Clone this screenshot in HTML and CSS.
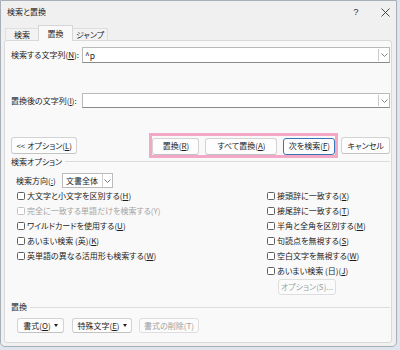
FILE: index.html
```html
<!DOCTYPE html>
<html lang="ja">
<head>
<meta charset="utf-8">
<title>検索と置換</title>
<link rel="stylesheet" href="styles.css">
</head>
<body>
<div class="window">
  <div class="titlebar">
    <span class="title">検索と置換</span>
    <span class="help">?</span>
    <svg class="close" width="9" height="9" viewBox="0 0 9 9"><path d="M0.5 0.5 L8.5 8.5 M8.5 0.5 L0.5 8.5" stroke="#333" stroke-width="0.9" fill="none"/></svg>
  </div>
  <div class="tabs">
    <div class="tab first">検索</div>
    <div class="tab active">置換</div>
    <div class="tab last">ジャンプ</div>
  </div>
  <div class="panel">
    <div class="row find">
      <label class="field-label">検索する文字列(<u>N</u>):</label>
      <div class="combo tall">
        <span class="value">^p</span>
        <span class="arrow"><svg width="7" height="4" viewBox="0 0 7 4"><path d="M0.5 0.5 L3.5 3.5 L6.5 0.5" stroke="#777" stroke-width="0.9" fill="none"/></svg></span>
      </div>
    </div>
    <div class="row replace">
      <label class="field-label">置換後の文字列(<u>I</u>):</label>
      <div class="combo">
        <span class="value"></span>
        <span class="arrow"><svg width="7" height="4" viewBox="0 0 7 4"><path d="M0.5 0.5 L3.5 3.5 L6.5 0.5" stroke="#777" stroke-width="0.9" fill="none"/></svg></span>
      </div>
    </div>
    <div class="row buttons">
      <div class="btn btn-options">&lt;&lt; オプション(<u>L</u>)</div>
      <div class="highlight">
        <div class="btn btn-replace">置換(<u>R</u>)</div>
        <div class="btn btn-all">すべて置換(<u>A</u>)</div>
        <div class="btn btn-next focus">次を検索(<u>F</u>)</div>
      </div>
      <div class="btn btn-cancel">キャンセル</div>
    </div>
    <div class="group-title first-group"><span>検索オプション</span><span class="rule"></span></div>
    <div class="row direction">
      <label class="dir-label">検索方向(<u>:</u>)</label>
      <div class="select">
        <span class="value">文書全体</span>
        <span class="sel-arrow"><svg width="7" height="4" viewBox="0 0 7 4"><path d="M0.5 0.5 L3.5 3.5 L6.5 0.5" stroke="#666" stroke-width="0.9" fill="none"/></svg></span>
      </div>
    </div>
    <div class="options">
      <div class="col col-left">
        <div class="check"><span class="box"></span>大文字と小文字を区別する(<u>H</u>)</div>
        <div class="check disabled"><span class="box"></span>完全に一致する単語だけを検索する(Y)</div>
        <div class="check"><span class="box"></span>ワイルドカードを使用する(<u>U</u>)</div>
        <div class="check"><span class="box"></span>あいまい検索 (英)(<u>K</u>)</div>
        <div class="check"><span class="box"></span>英単語の異なる活用形も検索する(<u>W</u>)</div>
      </div>
      <div class="col col-right">
        <div class="check"><span class="box"></span>接頭辞に一致する(<u>X</u>)</div>
        <div class="check"><span class="box"></span>接尾辞に一致する(<u>T</u>)</div>
        <div class="check"><span class="box"></span>半角と全角を区別する(<u>M</u>)</div>
        <div class="check"><span class="box"></span>句読点を無視する(<u>S</u>)</div>
        <div class="check"><span class="box"></span>空白文字を無視する(<u>W</u>)</div>
        <div class="check"><span class="box"></span>あいまい検索 (日)(<u>J</u>)</div>
        <div class="btn btn-more disabled">オプション(S)...</div>
      </div>
    </div>
    <div class="group-title second-group"><span>置換</span><span class="rule"></span></div>
    <div class="row bottom-buttons">
      <div class="btn btn-format">書式(<u>O</u>)<span class="tri"></span></div>
      <div class="btn btn-special">特殊文字(<u>E</u>)<span class="tri"></span></div>
      <div class="btn btn-clear disabled">書式の削除(T)</div>
    </div>
  </div>
</div>
</body>
</html>
```

FILE: styles.css
```css
* { box-sizing: border-box; }

html, body {
  margin: 0;
  padding: 0;
}

body {
  width: 400px;
  height: 350px;
  overflow: hidden;
  background: #dfe5ec;
  font-family: "Noto Sans CJK JP", "Noto Sans", sans-serif;
  font-feature-settings: "palt";
  font-size: 8px;
  line-height: 1;
  color: #1c1c1c;
}

u { text-decoration: underline; text-underline-offset: 1px; }

.window {
  width: 397px;
  height: 347px;
  background: #f0f0f0;
  border: 1px solid #a9afb7;
  border-radius: 0 0 5px 5px;
  display: flex;
  flex-direction: column;
}

.titlebar {
  height: 22px;
  display: flex;
  align-items: center;
  padding: 0 6px 0 6px;
}

.title { flex: 1; font-size: 8px; }

.help {
  width: 10px;
  text-align: center;
  margin-right: 20px;
  font-family: "Liberation Sans", sans-serif;
  font-size: 9.5px;
  color: #333;
}

.close { display: block; }

.tabs {
  height: 17px;
  display: flex;
  align-items: flex-end;
  padding-left: 4px;
}

.tab {
  height: 12px;
  border: 1px solid #dedede;
  border-bottom: none;
  background: #f2f2f2;
  display: flex;
  align-items: center;
  justify-content: center;
  padding-top: 1px;
}

.tab.first { width: 33px; border-right: none; }
.tab.last { width: 35px; border-left: none; }

.tab.active {
  width: 35px;
  height: 16px;
  margin-bottom: -1px;
  background: #f9f9f9;
  border-color: #d6d6d6;
  position: relative;
  padding-top: 0;
}

.panel {
  margin: 0 4px 0 3px;
  height: 303px;
  background: #f9f9f9;
  border: 1px solid #d9d9d9;
  border-radius: 3px;
  padding: 6px 1px 0 6px;
  display: flex;
  flex-direction: column;
}

.row { display: flex; align-items: center; }

.field-label { width: 71px; white-space: nowrap; }

.combo {
  width: 308px;
  height: 15px;
  background: #fff;
  border: 1px solid #b9b9b9;
  border-bottom-color: #8a8a8a;
  display: flex;
  align-items: stretch;
}

.combo.tall { height: 16px; }

.combo .value {
  flex: 1;
  padding-left: 2px;
  display: flex;
  align-items: center;
  font-size: 8.5px;
}

.combo .arrow {
  width: 11px;
  margin: 1px 0 1px 0;
  border-left: 1px solid #c9c9c9;
  display: flex;
  align-items: center;
  justify-content: center;
}

.row.replace { margin-top: 30px; }

.row.buttons { margin-top: 25px; height: 25px; }

.btn {
  height: 17px;
  background: #fdfdfd;
  border: 1px solid #d3d3d3;
  border-bottom-color: #c2c2c2;
  border-radius: 3px;
  display: flex;
  align-items: center;
  justify-content: center;
  white-space: nowrap;
}

.btn-options { width: 67px; }

.highlight {
  margin-left: 72px;
  height: 25px;
  border: 3px solid #f3a8c6;
  display: flex;
  align-items: center;
  padding-top: 1px;
}

.btn-replace { width: 47px; }
.btn-all { width: 72px; margin-left: 6px; }
.btn-next { width: 52px; margin-left: 6px; }
.btn.focus { border: 1px solid #3a72b8; }

.btn-cancel { width: 49px; margin-left: 3px; }

.group-title {
  display: flex;
  align-items: center;
  height: 9px;
  color: #222;
}

.group-title .rule {
  flex: 1;
  height: 1px;
  background: #dcdcdc;
  margin-left: 3px;
}

.first-group { margin-top: -1px; }

.row.direction { margin-top: 7px; padding-left: 5px; }

.dir-label { width: 46px; white-space: nowrap; }

.select {
  width: 51px;
  height: 15px;
  background: #fff;
  border: 1px solid #bcbcbc;
  display: flex;
  align-items: stretch;
}

.select .value {
  width: 39px;
  padding-left: 3px;
  display: flex;
  align-items: center;
}

.sel-arrow {
  flex: 1;
  border-left: 1px solid #d0d0d0;
  display: flex;
  align-items: center;
  justify-content: center;
}

.options {
  display: flex;
  padding-left: 6px;
}

.col-left { width: 250px; }

.check {
  height: 15px;
  display: flex;
  align-items: center;
  white-space: nowrap;
}

.check .box {
  width: 8px;
  height: 8px;
  border: 1px solid #5f5f5f;
  border-radius: 1.5px;
  background: #fff;
  margin-right: 2px;
}

.check.disabled { color: #a3a3a3; }
.check.disabled .box { border-color: #c4c4c4; }

.btn.disabled { color: #a0a0a0; border-color: #dedede; background: #fbfbfb; }

.btn-more { width: 58px; height: 16px; margin: 1px 0 0 11px; }

.second-group { margin-top: 7px; height: 10px; }

.row.bottom-buttons { margin-top: 6px; padding-left: 6px; }

.bottom-buttons .btn { height: 15px; }

.btn-format { width: 47px; }
.btn-special { width: 60px; margin-left: 8px; }
.btn-clear { width: 60px; margin-left: 7px; }

.tri {
  width: 0;
  height: 0;
  border-left: 2.5px solid transparent;
  border-right: 2.5px solid transparent;
  border-top: 3px solid #222;
  margin-left: 3px;
}
```
